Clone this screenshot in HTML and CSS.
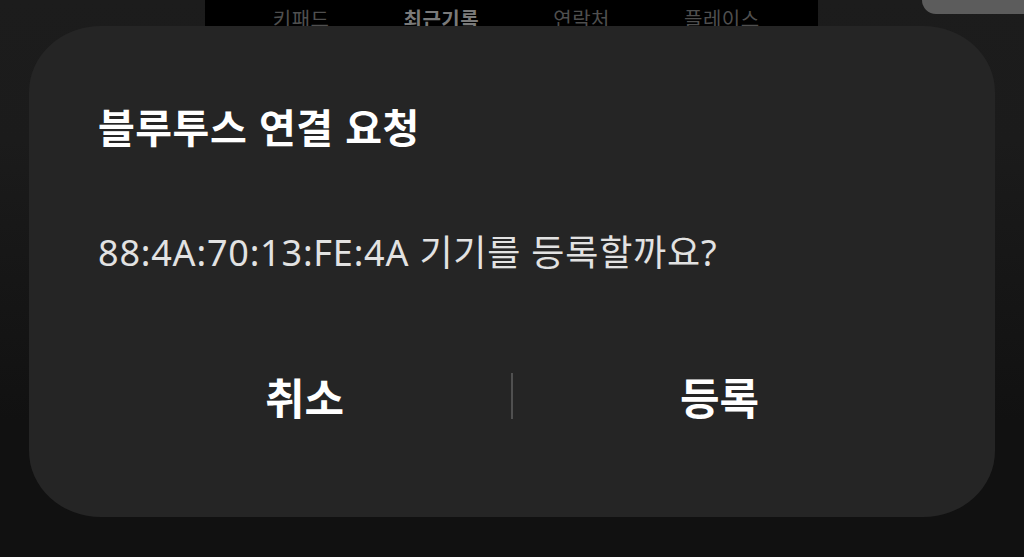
FILE: index.html
```html
<!DOCTYPE html>
<html lang="ko">
<head>
<meta charset="utf-8">
<title>블루투스 연결 요청</title>
<link rel="stylesheet" href="styles.css">
</head>
<body>
<div class="screen">
  <div class="topbar">
    <div class="tabs">
      <span class="tab">키패드</span>
      <span class="tab tab-active">최근기록</span>
      <span class="tab">연락처</span>
      <span class="tab">플레이스</span>
    </div>
  </div>
  <div class="corner-chip"></div>
  <div class="dialog">
    <h1 class="dialog-title">블루투스 연결 요청</h1>
    <p class="dialog-message">88:4A:70:13:FE:4A 기기를 등록할까요?</p>
    <div class="dialog-actions">
      <button class="action">취소</button>
      <span class="divider"></span>
      <button class="action">등록</button>
    </div>
  </div>
</div>
</body>
</html>
```

FILE: styles.css
```css
html, body {
  margin: 0;
  padding: 0;
}
body {
  width: 1024px;
  height: 557px;
  overflow: hidden;
  background: linear-gradient(to bottom, #1c1c1c 0px, #1b1b1b 140px, #111111 420px, #111111 557px);
  font-family: "Noto Sans CJK KR", "Noto Sans", sans-serif;
}
.screen {
  position: relative;
  width: 1024px;
  height: 557px;
}
.topbar {
  height: 26px;
  display: flex;
  padding-left: 205px;
}
.tabs {
  width: 613px;
  height: 26px;
  background: #000;
  overflow: hidden;
  display: flex;
  box-sizing: border-box;
  padding: 0 26px;
}
.tab {
  flex: 1;
  text-align: center;
  font-size: 20px;
  line-height: 20px;
  padding-top: 9px;
  color: #4f4f4f;
  letter-spacing: 0.5px;
}
.tab-active {
  color: #7a7a7a;
  font-weight: 700;
}
.corner-chip {
  position: absolute;
  top: 0;
  right: 0;
  width: 102px;
  height: 14px;
  background: #5c5c5c;
  border-bottom-left-radius: 20px;
}
.dialog {
  margin-left: 29px;
  width: 966px;
  height: 491px;
  box-sizing: border-box;
  background: #252525;
  border-radius: 72px / 66px;
  padding: 75px 69px 0;
  display: flex;
  flex-direction: column;
}
.dialog-title {
  margin: 0;
  font-size: 40px;
  line-height: 50px;
  font-weight: 700;
  color: #ffffff;
  letter-spacing: 0.5px;
}
.dialog-message {
  margin: 81px 0 0;
  font-family: "Noto Sans", "Noto Sans CJK KR", sans-serif;
  font-size: 36px;
  line-height: 42px;
  font-weight: 400;
  color: #e2e2e2;
  letter-spacing: 0.8px;
}
.dialog-actions {
  margin-top: 92px;
  height: 60px;
  display: flex;
  align-items: center;
}
.action {
  flex: 1;
  background: none;
  border: none;
  padding: 0;
  font-family: inherit;
  font-size: 43px;
  line-height: 60px;
  font-weight: 700;
  color: #ffffff;
  text-align: center;
}
.divider {
  width: 2px;
  height: 46px;
  background: #505050;
}
```
